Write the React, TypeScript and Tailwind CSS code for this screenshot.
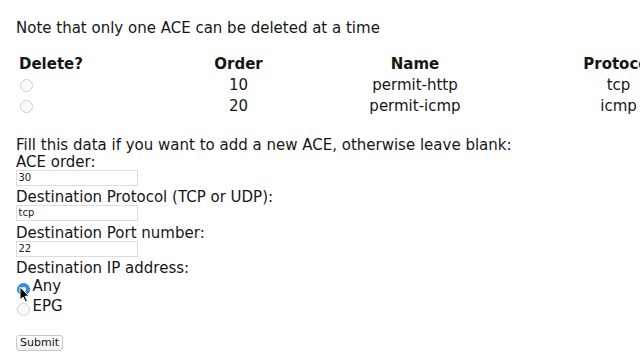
import React from "react";

function Radio({ checked = false, className = "" }: { checked?: boolean; className?: string }) {
  return (
    <span
      className={
        "inline-flex shrink-0 items-center justify-center rounded-full " +
        (checked
          ? "bg-[#3d8fe6] border border-[#2f7fd8] "
          : "bg-[#fbfbfb] border border-[#cfcfcf] ") +
        className
      }
    >
      {checked && <span className="block w-[5px] h-[5px] rounded-full bg-white" />}
    </span>
  );
}

function Cursor() {
  return (
    <svg
      className="absolute left-[19px] top-[286px]"
      width="11"
      height="17"
      viewBox="0 0 11 17"
    >
      <path
        d="M1 1 L1 14 L4 11 L6.5 16 L8.5 15 L6 10.2 L10 10.2 Z"
        fill="#000"
        stroke="#fff"
        strokeWidth="1"
        strokeLinejoin="round"
      />
    </svg>
  );
}

function Field({ value }: { value: string }) {
  return (
    <div className="w-[122px] h-[16px] mb-[3.5px] border border-[#dcdcdc] bg-white flex items-center pl-[1.5px] text-[10px] leading-[14px] text-[#222]">
      {value}
    </div>
  );
}

export default function App() {
  const rows = [
    { order: "10", name: "permit-http", proto: "tcp" },
    { order: "20", name: "permit-icmp", proto: "icmp" },
  ];
  return (
    <div
      className="relative w-[640px] h-[360px] overflow-hidden bg-white text-[#161616] text-[15px]"
      style={{ fontFamily: '"DejaVu Sans", Verdana, sans-serif' }}
    >
      <div className="pl-[16px] pt-[19px]">
        <div className="leading-[18px] whitespace-nowrap">
          Note that only one ACE can be deleted at a time
        </div>

        <div className="mt-[16.5px] whitespace-nowrap">
          <div className="flex h-[21px] items-center font-bold leading-[21px]">
            <div className="shrink-0 w-[70px] text-center">Delete?</div>
            <div className="shrink-0 ml-[93px] w-[119px] text-center">Order</div>
            <div className="shrink-0 ml-[57px] w-[120px] text-center">Name</div>
            <div className="shrink-0 ml-[84px] w-[119px] text-center">Protocol</div>
          </div>
          {rows.map((r) => (
            <div key={r.order} className="flex h-[21px] items-center leading-[21px]">
              <div className="shrink-0 w-[70px] flex items-center">
                <Radio className="ml-[4px] w-[13px] h-[13px]" />
              </div>
              <div className="shrink-0 ml-[93px] w-[119px] text-center">{r.order}</div>
              <div className="shrink-0 ml-[57px] w-[120px] text-center">{r.name}</div>
              <div className="shrink-0 ml-[84px] w-[119px] text-center">{r.proto}</div>
            </div>
          ))}
        </div>

        <div className="mt-[20px] leading-[16px] whitespace-nowrap">
          <div className="leading-[17px]">
            Fill this data if you want to add a new ACE, otherwise leave blank:
          </div>
          <div>ACE order:</div>
          <Field value="30" />
          <div>Destination Protocol (TCP or UDP):</div>
          <Field value="tcp" />
          <div>Destination Port number:</div>
          <Field value="22" />
          <div>Destination IP address:</div>
        </div>

        <div className="leading-[20px]">
          <div className="flex items-start h-[20px]">
            <Radio checked className="ml-[1px] mt-[7px] w-[13px] h-[13px]" />
            <span className="ml-[2.5px]">Any</span>
          </div>
          <div className="flex items-start h-[20px]">
            <Radio className="ml-[1px] mt-[7px] w-[13px] h-[13px]" />
            <span className="ml-[2.5px]">EPG</span>
          </div>
        </div>

        <button className="mt-[19px] h-[16px] w-[47px] flex items-center justify-center rounded-[3px] border border-[#c9c9c9] bg-gradient-to-b from-white to-[#f0f0f0] text-[11px] leading-[14px] text-[#111]">
          Submit
        </button>
      </div>
      <Cursor />
    </div>
  );
}
